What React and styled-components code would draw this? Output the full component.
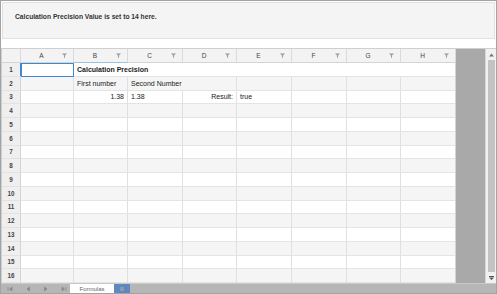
import React from "react";
import styled, { createGlobalStyle } from "styled-components";

const GlobalStyle = createGlobalStyle`
  html, body {
    margin: 0;
    padding: 0;
    background: #fff;
  }
  * {
    box-sizing: border-box;
  }
`;

// Layout
const Frame = styled.div`
  width: 497px;
  height: 294px;
  border: 1px solid #a3a3a3;
  display: flex;
  flex-direction: column;
  font-family: "Liberation Sans", Arial, sans-serif;
  color: #333;
  background: #fff;
`;

const InfoPanel = styled.div`
  height: 37px;
  margin: 1px 1px 0;
  background: #f4f4f4;
  border: 1px solid #e2e2e2;
  padding: 10px 0 0 12px;
  font-size: 6.7px;
  font-weight: bold;
  color: #333;
`;

const Sheet = styled.div`
  flex: 1;
  margin: 9px 0 0;
  display: flex;
  flex-direction: column;
  border-top: 1px solid #cfcfcf;
  min-height: 0;
`;

const SheetBody = styled.div`
  flex: 1;
  display: flex;
  min-height: 0;
`;

const Grid = styled.div`
  width: 454px;
  display: grid;
  grid-template-columns: 19px 53px 54px 55px 54px 55px 55px 54px 55px;
  grid-template-rows: 14px repeat(16, 1fr);
  border-left: 1px solid #cfcfcf;
`;

const GrayFill = styled.div`
  flex: 1;
  background: #a9a9a9;
  border-left: 1px solid #d4d4d4;
`;

const ScrollBar = styled.div`
  width: 11px;
  background: #f1f1f1;
  border-left: 1px solid #d8d8d8;
  display: flex;
  flex-direction: column;
  align-items: center;
`;

const ScrollArrow = styled.div`
  height: 11px;
  display: flex;
  align-items: center;
  justify-content: center;
`;

const ScrollThumb = styled.div`
  flex: 1;
  width: 7px;
  background: #c3c3c3;
`;

const TabBar = styled.div`
  height: 10px;
  background: #b6b6b6;
  display: flex;
  align-items: stretch;
  border-top: 1px solid #c9c9c9;
`;

const NavButton = styled.div`
  width: 18px;
  display: flex;
  align-items: center;
  justify-content: center;
`;

const SheetTab = styled.div`
  background: ${(p) => (p.$add ? "#5f87c0" : "#fff")};
  width: ${(p) => (p.$add ? "16px" : "44px")};
  margin-left: ${(p) => (p.$first ? "-3px" : "0")};
  display: flex;
  align-items: center;
  justify-content: center;
  font-size: 6px;
  color: #666;
`;

// Cells
const ColHeader = styled.div`
  background: #f3f3f3;
  border-right: 1px solid #dadada;
  border-bottom: 1px solid ${(p) => (p.$active ? "#9cc3e6" : "#d4d4d4")};
  display: flex;
  align-items: center;
  justify-content: center;
  padding-right: ${(p) => (p.$corner ? "0" : "11px")};
  position: relative;
  font-size: 6.5px;
  color: #444;
`;

const FilterIcon = styled.svg`
  position: absolute;
  right: 6px;
  top: 4px;
`;

const RowHeader = styled.div`
  background: #efefef;
  border-right: 1px solid #d4d4d4;
  border-bottom: 1px solid #e2e2e2;
  display: flex;
  align-items: center;
  justify-content: center;
  font-size: 6.3px;
  font-weight: bold;
  color: #444;
`;

const Cell = styled.div`
  grid-column: ${(p) => (p.$span ? `span ${p.$span}` : "auto")};
  background: ${(p) => (p.$alt ? "#f5f5f5" : "#fff")};
  border-right: 1px solid ${(p) => (p.$selected ? "#3a8ad4" : "#e0e0e0")};
  border-bottom: 1px solid ${(p) => (p.$selected ? "#3a8ad4" : "#e4e4e4")};
  display: flex;
  align-items: center;
  justify-content: ${(p) => (p.$right ? "flex-end" : "flex-start")};
  padding: 0 3px;
  font-size: 7px;
  font-weight: ${(p) => (p.$bold ? "bold" : "normal")};
  color: #1a1a1a;
  white-space: nowrap;
  box-shadow: ${(p) => (p.$selected ? "inset 1px 1px 0 #3a8ad4, -1px -1px 0 #3a8ad4" : "none")};
`;

const columns = ["A", "B", "C", "D", "E", "F", "G", "H"];

// row content: list of cells {text, span, bold, right}
const rowData = {
  1: [{}, { text: "Calculation Precision", span: 7, bold: true }],
  2: [{}, { text: "First number" }, { text: "Second Number", span: 2 }, {}, {}, {}, {}],
  3: [{}, { text: "1.38", right: true }, { text: "1.38" }, { text: "Result:", right: true }, { text: "true" }, {}, {}, {}],
};

function Filter() {
  return (
    <FilterIcon width="5" height="5" viewBox="0 0 5 5">
      <path d="M0 0.5 H5 L3 2.5 V4.8 H2 V2.5 Z" fill="#9a9a9a" />
    </FilterIcon>
  );
}

function Row({ n }) {
  const cells = rowData[n] || columns.map(() => ({}));
  const alt = n % 2 === 0;
  return (
    <>
      <RowHeader>{n}</RowHeader>
      {cells.map((c, i) => (
        <Cell
          key={i}
          $alt={alt}
          $span={c.span}
          $bold={c.bold}
          $right={c.right}
          $selected={n === 1 && i === 0}
        >
          {c.text}
        </Cell>
      ))}
    </>
  );
}

function Arrow({ dir }) {
  const paths = {
    first: "M1 1 V5 M5 1 L2.5 3 L5 5 Z",
    prev: "M4.5 1 L2 3 L4.5 5 Z",
    next: "M1.5 1 L4 3 L1.5 5 Z",
    last: "M5 1 V5 M1 1 L3.5 3 L1 5 Z",
  };
  return (
    <svg width="6" height="6" viewBox="0 0 6 6">
      <path d={paths[dir]} fill="#8a8a8a" stroke="#8a8a8a" strokeWidth="0.8" />
    </svg>
  );
}

export default function App() {
  const rows = Array.from({ length: 16 }, (_, i) => i + 1);
  return (
    <>
      <GlobalStyle />
      <Frame>
        <InfoPanel>Calculation Precision Value is set to 14 here.</InfoPanel>
        <Sheet>
          <SheetBody>
            <Grid>
              <ColHeader $corner />
              {columns.map((c) => (
                <ColHeader key={c} $active={c === "B"}>
                  {c}
                  <Filter />
                </ColHeader>
              ))}
              {rows.map((n) => (
                <Row key={n} n={n} />
              ))}
            </Grid>
            <GrayFill />
            <ScrollBar>
              <ScrollArrow>
                <svg width="5" height="4" viewBox="0 0 5 4">
                  <path d="M0 3.5 L2.5 0.5 L5 3.5 Z" fill="#777" />
                </svg>
              </ScrollArrow>
              <ScrollThumb />
              <ScrollArrow>
                <svg width="5" height="4" viewBox="0 0 5 4">
                  <path d="M0 0 H5 V1 H0 Z M0 1.5 L5 1.5 L2.5 4 Z" fill="#555" />
                </svg>
              </ScrollArrow>
            </ScrollBar>
          </SheetBody>
          <TabBar>
            <NavButton><Arrow dir="first" /></NavButton>
            <NavButton><Arrow dir="prev" /></NavButton>
            <NavButton><Arrow dir="next" /></NavButton>
            <NavButton><Arrow dir="last" /></NavButton>
            <SheetTab $first>Formulas</SheetTab>
            <SheetTab $add>
              <svg width="4" height="4" viewBox="0 0 4 4">
                <path d="M0 0 H4 V4 H0 Z" fill="#8a9bb5" />
              </svg>
            </SheetTab>
          </TabBar>
        </Sheet>
      </Frame>
    </>
  );
}
